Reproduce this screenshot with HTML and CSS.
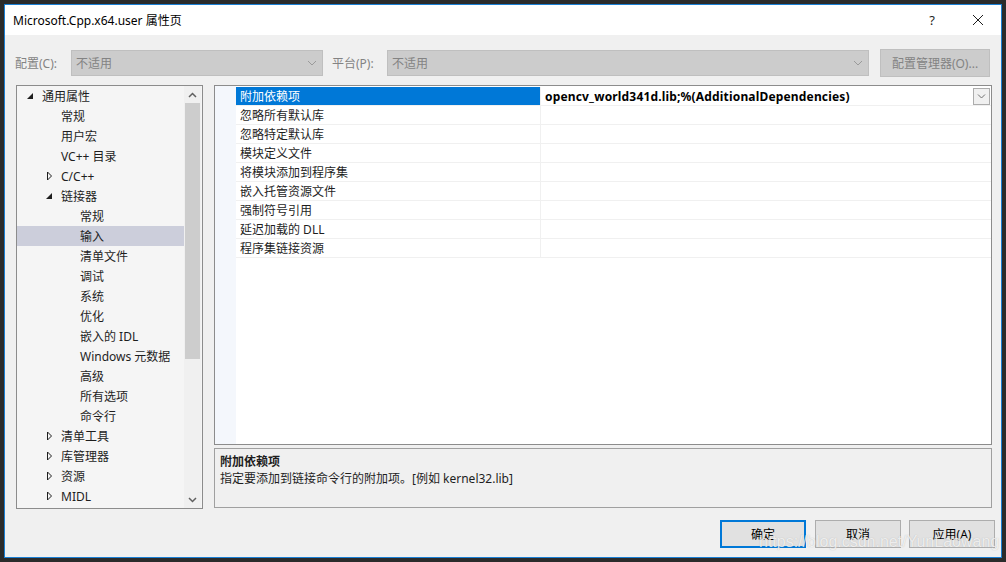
FILE: index.html
```html
<!DOCTYPE html>
<html>
<head>
<meta charset="utf-8">
<link rel="stylesheet" href="styles.css">
</head>
<body>
<div class="window">
  <div class="titlebar">
    <div class="title">Microsoft.Cpp.x64.user 属性页</div>
    <div class="tbtn help">?</div>
    <div class="tbtn close">
      <svg width="12" height="12" viewBox="0 0 12 12"><path d="M1 1L11 11M11 1L1 11" stroke="#1e1e1e" stroke-width="1" fill="none"/></svg>
    </div>
  </div>
  <div class="config">
    <div class="clabel l1">配置(C):</div>
    <div class="csel s1"><span>不适用</span><svg class="chev" width="10" height="6" viewBox="0 0 10 6"><path d="M1 1L5 5L9 1" stroke="#9a9a9a" fill="none"/></svg></div>
    <div class="clabel l2">平台(P):</div>
    <div class="csel s2"><span>不适用</span><svg class="chev" width="10" height="6" viewBox="0 0 10 6"><path d="M1 1L5 5L9 1" stroke="#9a9a9a" fill="none"/></svg></div>
    <div class="cbtn">配置管理器(O)...</div>
  </div>
  <div class="main">
    <div class="tree">
      <div class="tree-list">
        <div class="node lv0"><span class="arr"><svg width="7" height="7" viewBox="0 0 7 7"><path d="M6 0V6H0Z" fill="#1e1e1e"/></svg></span>通用属性</div>
        <div class="node lv1"><span class="arr"></span>常规</div>
        <div class="node lv1"><span class="arr"></span>用户宏</div>
        <div class="node lv1"><span class="arr"></span>VC++ 目录</div>
        <div class="node lv1"><span class="arr"><svg width="7" height="10" viewBox="0 0 7 10"><path d="M1.5 1V9L5.5 5Z" stroke="#1e1e1e" fill="none"/></svg></span>C/C++</div>
        <div class="node lv1"><span class="arr"><svg width="7" height="7" viewBox="0 0 7 7"><path d="M6 0V6H0Z" fill="#1e1e1e"/></svg></span>链接器</div>
        <div class="node lv2"><span class="arr"></span>常规</div>
        <div class="node lv2 sel"><span class="arr"></span>输入</div>
        <div class="node lv2"><span class="arr"></span>清单文件</div>
        <div class="node lv2"><span class="arr"></span>调试</div>
        <div class="node lv2"><span class="arr"></span>系统</div>
        <div class="node lv2"><span class="arr"></span>优化</div>
        <div class="node lv2"><span class="arr"></span>嵌入的 IDL</div>
        <div class="node lv2"><span class="arr"></span>Windows 元数据</div>
        <div class="node lv2"><span class="arr"></span>高级</div>
        <div class="node lv2"><span class="arr"></span>所有选项</div>
        <div class="node lv2"><span class="arr"></span>命令行</div>
        <div class="node lv1"><span class="arr"><svg width="7" height="10" viewBox="0 0 7 10"><path d="M1.5 1V9L5.5 5Z" stroke="#1e1e1e" fill="none"/></svg></span>清单工具</div>
        <div class="node lv1"><span class="arr"><svg width="7" height="10" viewBox="0 0 7 10"><path d="M1.5 1V9L5.5 5Z" stroke="#1e1e1e" fill="none"/></svg></span>库管理器</div>
        <div class="node lv1"><span class="arr"><svg width="7" height="10" viewBox="0 0 7 10"><path d="M1.5 1V9L5.5 5Z" stroke="#1e1e1e" fill="none"/></svg></span>资源</div>
        <div class="node lv1"><span class="arr"><svg width="7" height="10" viewBox="0 0 7 10"><path d="M1.5 1V9L5.5 5Z" stroke="#1e1e1e" fill="none"/></svg></span>MIDL</div>
      </div>
      <div class="vscroll">
        <div class="sarrow"><svg width="9" height="6" viewBox="0 0 9 6"><path d="M1 5L4.5 1.5L8 5" stroke="#606060" stroke-width="1.5" fill="none"/></svg></div>
        <div class="strack"><div class="sthumb"></div></div>
        <div class="sarrow"><svg width="9" height="6" viewBox="0 0 9 6"><path d="M1 1L4.5 4.5L8 1" stroke="#606060" stroke-width="1.5" fill="none"/></svg></div>
      </div>
    </div>
    <div class="right">
      <div class="grid">
        <div class="gutter"></div>
        <div class="rows">
          <div class="row"><div class="name selname">附加依赖项</div><div class="value"><span class="vtext">opencv_world341d.lib;%(AdditionalDependencies)</span><span class="ddbtn"><svg width="9" height="5" viewBox="0 0 9 5"><path d="M1 0.5L4.5 4L8 0.5" stroke="#707070" fill="none"/></svg></span></div></div>
          <div class="row"><div class="name">忽略所有默认库</div><div class="value"></div></div>
          <div class="row"><div class="name">忽略特定默认库</div><div class="value"></div></div>
          <div class="row"><div class="name">模块定义文件</div><div class="value"></div></div>
          <div class="row"><div class="name">将模块添加到程序集</div><div class="value"></div></div>
          <div class="row"><div class="name">嵌入托管资源文件</div><div class="value"></div></div>
          <div class="row"><div class="name">强制符号引用</div><div class="value"></div></div>
          <div class="row"><div class="name">延迟加载的 DLL</div><div class="value"></div></div>
          <div class="row"><div class="name">程序集链接资源</div><div class="value"></div></div>
        </div>
      </div>
      <div class="desc">
        <div class="dtitle">附加依赖项</div>
        <div class="dtext">指定要添加到链接命令行的附加项。[例如 kernel32.lib]</div>
      </div>
    </div>
  </div>
  <div class="buttons">
    <div class="btn default">确定</div>
    <div class="btn cancel">取消</div>
    <div class="btn apply">应用(A)</div>
  </div>
  <div class="watermark">https://blog.csdn.net/YunLaowang</div>
</div>
</body>
</html>
```
FILE: styles.css
```css
* { box-sizing: border-box; }
html, body { margin: 0; padding: 0; }
body {
  background: #2b2b2b;
  width: 1006px;
  height: 562px;
  overflow: hidden;
  font-family: "Noto Sans", "Noto Sans CJK SC", sans-serif;
  font-size: 12px;
  color: #1e1e1e;
}
.window {
  position: relative;
  margin: 4px 0 0 4px;
  width: 998px;
  height: 554px;
  border: 1px solid #1a7fd4;
  background: #f0f0f0;
  display: flex;
  flex-direction: column;
}
.titlebar {
  height: 30px;
  background: #ffffff;
  display: flex;
  align-items: center;
}
.title {
  flex: 1;
  padding-left: 8px;
  font-size: 12px;
  color: #000;
}
.tbtn {
  width: 46px;
  height: 30px;
  display: flex;
  align-items: center;
  justify-content: center;
}
.help { font-size: 13px; color: #1e1e1e; }
.config {
  margin-top: 14px;
  height: 28px;
  display: flex;
  align-items: center;
  padding-left: 10px;
}
.clabel { color: #838383; }
.l1 { width: 56px; }
.l2 { width: 55px; margin-left: 9px; }
.csel {
  height: 26px;
  background: #cccccc;
  border: 1px solid #bfbfbf;
  display: flex;
  align-items: center;
  padding-left: 4px;
  padding-right: 5px;
  color: #838383;
}
.csel span { flex: 1; }
.s1 { width: 252px; }
.s2 { width: 482px; }
.cbtn {
  margin-left: 11px;
  width: 110px;
  height: 28px;
  background: #cccccc;
  border: 1px solid #bfbfbf;
  color: #838383;
  display: flex;
  align-items: center;
  justify-content: center;
}
.main {
  margin-top: 8px;
  display: flex;
  padding-left: 11px;
  gap: 11px;
}
.tree {
  width: 187px;
  height: 424px;
  border: 1px solid #8c8c8c;
  background: #f5f5f5;
  display: flex;
  overflow: hidden;
}
.tree-list { flex: 1; }
.node {
  height: 20px;
  display: flex;
  align-items: center;
  white-space: nowrap;
  color: #1e1e1e;
}
.node.lv0 { padding-left: 10px; }
.node.lv1 { padding-left: 29px; }
.node.lv2 { padding-left: 48px; }
.node.sel { background: #cccedb; }
.arr {
  width: 15px;
  height: 20px;
  display: flex;
  align-items: center;
}
.vscroll {
  width: 17px;
  background: #f0f0f0;
  display: flex;
  flex-direction: column;
  margin-right: 1px;
}
.sarrow {
  height: 17px;
  display: flex;
  align-items: center;
  justify-content: center;
}
.strack { flex: 1; padding: 0 1px; }
.sthumb { height: 256px; background: #cdcdcd; }
.right {
  width: 778px;
  display: flex;
  flex-direction: column;
  gap: 3px;
}
.grid {
  height: 360px;
  border: 1px solid #8c8c8c;
  background: #ffffff;
  display: flex;
}
.gutter { width: 21px; background: #f4f7fc; }
.rows { flex: 1; padding-top: 1px; }
.row {
  height: 19px;
  display: flex;
  border-bottom: 1px solid #f0f0f0;
}
.name {
  width: 305px;
  border-right: 1px solid #f0f0f0;
  padding-left: 4px;
  display: flex;
  align-items: center;
  color: #1e1e1e;
}
.selname { background: #0078d7; color: #ffffff; }
.value {
  flex: 1;
  display: flex;
  align-items: center;
  padding-left: 4px;
  padding-right: 1px;
}
.vtext { flex: 1; font-weight: bold; color: #000; letter-spacing: 0.17px; }
.ddbtn {
  width: 17px;
  height: 17px;
  border: 1px solid #acacac;
  background: #f0f0f0;
  display: flex;
  align-items: center;
  justify-content: center;
}
.desc {
  height: 60px;
  border: 1px solid #a0a0a0;
  background: #f0f0f0;
  padding: 4px 0 0 5px;
}
.dtitle { font-weight: bold; height: 17px; line-height: 17px; color: #1e1e1e; }
.dtext { height: 17px; line-height: 17px; color: #1e1e1e; }
.buttons {
  margin-top: 11px;
  display: flex;
  justify-content: flex-end;
  padding-right: 6px;
}
.btn {
  width: 86px;
  height: 28px;
  background: #e1e1e1;
  border: 1px solid #adadad;
  display: flex;
  align-items: center;
  justify-content: center;
  color: #000;
}
.btn.default { border: 2px solid #0078d7; }
.btn.cancel { margin-left: 9px; }
.btn.apply { margin-left: 8px; }
.watermark {
  position: absolute;
  left: 754px;
  top: 528px;
  font-family: "Liberation Sans", sans-serif;
  font-size: 16px;
  color: rgba(255, 255, 255, 0.75);
  text-shadow: 0 0 1px rgba(140, 140, 140, 0.55);
  white-space: nowrap;
}
```
